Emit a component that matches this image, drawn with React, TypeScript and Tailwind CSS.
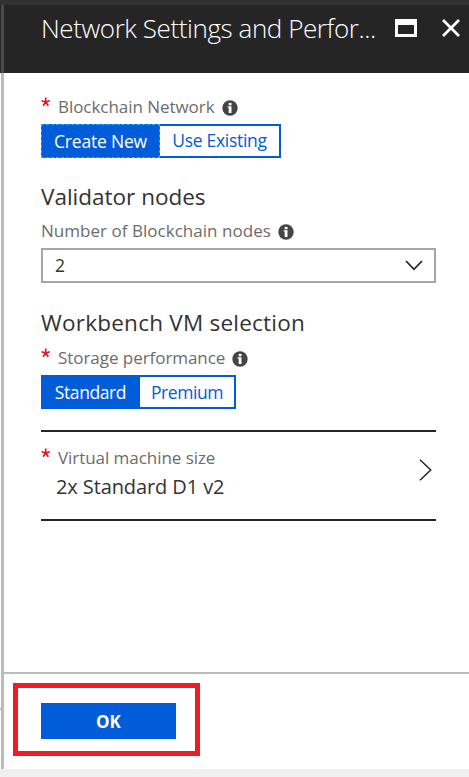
import React from "react";

function InfoIcon() {
  return (
    <svg width="16" height="16" viewBox="0 0 16 16" className="relative top-[1px] ml-[7px] shrink-0">
      <circle cx="8" cy="8" r="7.7" fill="#444444" />
      <rect x="6.7" y="2.9" width="2.8" height="2.4" fill="#ffffff" />
      <path d="M5.6 6.3h3.9v6.7H6.7V7.4H5.6z" fill="#ffffff" />
    </svg>
  );
}

function Required() {
  return (
    <svg width="10" height="10" viewBox="0 0 10 10" className="relative -top-[5px] mr-[7px] shrink-0">
      <path d="M4.7 5V.6M4.7 5L.6 3.7M4.7 5l4.1-1.3M4.7 5L2.1 8.7M4.7 5l2.6 3.7" stroke="#e81123" strokeWidth="1.7" fill="none" />
    </svg>
  );
}

function Label({ text, tracking, required = false, info = true }: { text: string; tracking: string; required?: boolean; info?: boolean }) {
  return (
    <div className="flex h-[22px] items-center text-[17px] leading-[22px] text-[#6c6c6c]">
      {required && <Required />}
      <span className={tracking}>{text}</span>
      {info && <InfoIcon />}
    </div>
  );
}

export default function App() {
  return (
    <div className="flex h-[777px] w-[469px] flex-col overflow-hidden bg-[#f0f0f0] font-['Open_Sans','Noto_Sans',sans-serif] whitespace-nowrap">
      <div className="h-[5px] shrink-0 bg-[#323232]" />
      <header className="flex h-[68px] shrink-0 bg-[#252525]">
        <div className="ml-px w-[3px] bg-[#4a4a4a]" />
        <h1 className="ml-[37px] w-[336px] pt-[3px] text-[26px] leading-[40px] font-light tracking-[-0.42px] text-white">
          Network Settings and Perfor...
        </h1>
        <svg width="22" height="18" viewBox="0 0 22 18" className="mt-[14px] ml-[18px] shrink-0">
          <path fillRule="evenodd" d="M0 0h22v18H0zM3 6v9h16V6z" fill="#ffffff" />
        </svg>
        <svg width="18" height="18" viewBox="0 0 18 18" className="mt-[14px] ml-[25px] shrink-0">
          <path d="M1 1l16 16M17 1L1 17" stroke="#ffffff" strokeWidth="2.8" />
        </svg>
      </header>
      <div className="flex h-[696px] shrink-0 bg-white">
        <div className="w-px pt-[635px]">
          <div className="h-[2px] bg-[#bbbbbb]" />
        </div>
        <div className="w-[3px] bg-[#bbbbbb]" />
        <div className="flex flex-1 flex-col">
          <main className="flex h-[599px] w-[432px] flex-col pt-[23px] pl-[37px]">
            <Label required text="Blockchain Network" tracking="tracking-[-0.05px]" />
            <div className="mt-[6px] flex h-[34px] w-[240px] shrink-0 border-2 border-[#015cda] text-[17.5px] leading-[29px]">
              <div className="-my-[2px] -ml-[2px] w-[119px] border border-dashed border-[#1db3f5] bg-[#015cda] text-center leading-[32px] tracking-[-0.2px] text-white">Create New</div>
              <div className="flex-1 text-center tracking-[-0.3px] text-[#015cda]">Use Existing</div>
            </div>
            <h2 className="mt-[24px] h-[30px] text-[22.5px] leading-[30px] text-[#333333]"><span className="tracking-[0px]">Validator nodes</span></h2>
            <div className="mt-[8px]">
              <Label text="Number of Blockchain nodes" tracking="tracking-[0.03px]" />
            </div>
            <div className="mt-[6px] flex h-[35px] w-[395px] shrink-0 items-center justify-between border-2 border-[#a6a6a6] pr-[11px] pl-[12px] text-[17.5px] text-[#333333]">
              <span>2</span>
              <svg width="18" height="11" viewBox="0 0 18 11">
                <path d="M1 1l8 8.3L17 1" stroke="#252525" strokeWidth="1.8" fill="none" />
              </svg>
            </div>
            <h2 className="mt-[25px] h-[30px] text-[22.5px] leading-[30px] text-[#333333]"><span className="tracking-[0.23px]">Workbench VM selection</span></h2>
            <div className="mt-[9px]">
              <Label required text="Storage performance" tracking="tracking-[-0.05px]" />
            </div>
            <div className="mt-[6px] flex h-[34px] w-[195px] shrink-0 border-2 border-[#015cda] text-[17.5px] leading-[30px]">
              <div className="w-[97px] bg-[#015cda] pr-[2px] text-center tracking-[-0.4px] text-white">Standard</div>
              <div className="flex-1 text-center tracking-[-0.45px] text-[#015cda]">Premium</div>
            </div>
            <div className="mt-[21px] flex h-[91px] w-[395px] shrink-0 justify-between border-y-2 border-[#252525] pr-[4px]">
              <div className="pt-[15px]">
                <Label required info={false} text="Virtual machine size" tracking="tracking-[-0.05px]" />
                <div className="mt-[5px] ml-[15px] h-[26px] text-[20px] leading-[26px] text-[#333333]"><span className="tracking-[-0.1px]">2x Standard D1 v2</span></div>
              </div>
              <svg width="13" height="22" viewBox="0 0 13 22" className="mt-[27px]">
                <path d="M1 .7L11.7 11 1 21.3" stroke="#252525" strokeWidth="1.5" fill="none" />
              </svg>
            </div>
          </main>
          <footer className="flex-1 border-t-2 border-[#bbbbbb] pt-[9px] pl-[9px]">
            <div className="h-[73px] w-[187px] border-[5px] border-[#ee1c24] pt-[15px] pl-[23px]">
              <button className="block h-[36px] w-[135px] bg-[#015cda] text-center text-[17px] leading-[37px] font-bold text-white">OK</button>
            </div>
          </footer>
        </div>
      </div>
    </div>
  );
}
